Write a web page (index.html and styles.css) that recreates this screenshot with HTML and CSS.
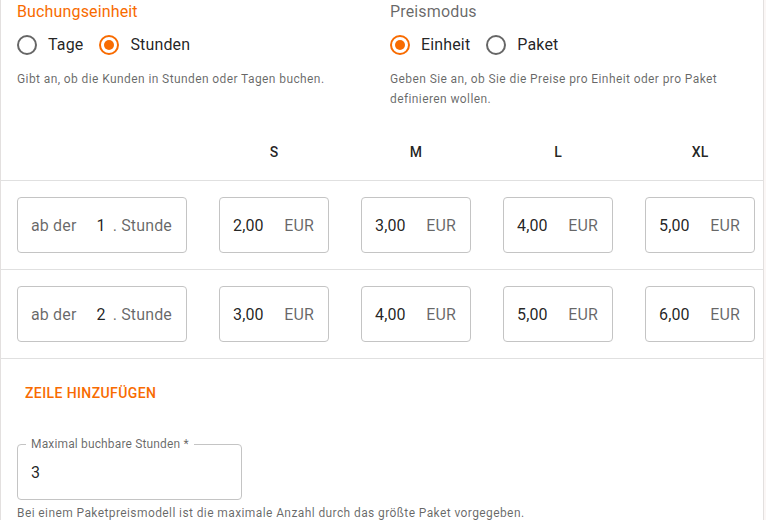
FILE: index.html
```html
<!DOCTYPE html>
<html lang="de">
<head>
<meta charset="utf-8">
<title>Preise</title>
<link rel="stylesheet" href="styles.css">
</head>
<body>
<div class="card">
  <div class="top">
    <div class="group">
      <div class="legend legend-active">Buchungseinheit</div>
      <div class="radios">
        <label class="radio"><span class="icon"><svg width="24" height="24" viewBox="0 0 24 24"><circle cx="12" cy="12" r="9" fill="none" stroke="currentColor" stroke-width="2"/></svg></span><span class="rlabel">Tage</span></label>
        <label class="radio radio-on"><span class="icon"><svg width="24" height="24" viewBox="0 0 24 24"><circle cx="12" cy="12" r="9" fill="none" stroke="currentColor" stroke-width="2"/><circle cx="12" cy="12" r="5" fill="currentColor"/></svg></span><span class="rlabel">Stunden</span></label>
      </div>
      <p class="help">Gibt an, ob die Kunden in Stunden oder Tagen buchen.</p>
    </div>
    <div class="group">
      <div class="legend">Preismodus</div>
      <div class="radios">
        <label class="radio radio-on"><span class="icon"><svg width="24" height="24" viewBox="0 0 24 24"><circle cx="12" cy="12" r="9" fill="none" stroke="currentColor" stroke-width="2"/><circle cx="12" cy="12" r="5" fill="currentColor"/></svg></span><span class="rlabel">Einheit</span></label>
        <label class="radio"><span class="icon"><svg width="24" height="24" viewBox="0 0 24 24"><circle cx="12" cy="12" r="9" fill="none" stroke="currentColor" stroke-width="2"/></svg></span><span class="rlabel">Paket</span></label>
      </div>
      <p class="help help-wide">Geben Sie an, ob Sie die Preise pro Einheit oder pro Paket definieren wollen.</p>
    </div>
  </div>

  <div class="row head">
    <div class="cell-first"></div>
    <div class="cell">S</div>
    <div class="cell">M</div>
    <div class="cell">L</div>
    <div class="cell">XL</div>
  </div>

  <div class="row">
    <div class="box box-first"><span class="adorn">ab der</span><span class="num">1</span><span class="adorn">. Stunde</span></div>
    <div class="box box-price"><span class="val">2,00</span><span class="adorn">EUR</span></div>
    <div class="box box-price"><span class="val">3,00</span><span class="adorn">EUR</span></div>
    <div class="box box-price"><span class="val">4,00</span><span class="adorn">EUR</span></div>
    <div class="box box-price"><span class="val">5,00</span><span class="adorn">EUR</span></div>
  </div>

  <div class="row">
    <div class="box box-first"><span class="adorn">ab der</span><span class="num">2</span><span class="adorn">. Stunde</span></div>
    <div class="box box-price"><span class="val">3,00</span><span class="adorn">EUR</span></div>
    <div class="box box-price"><span class="val">4,00</span><span class="adorn">EUR</span></div>
    <div class="box box-price"><span class="val">5,00</span><span class="adorn">EUR</span></div>
    <div class="box box-price"><span class="val">6,00</span><span class="adorn">EUR</span></div>
  </div>

  <div class="bottom">
    <button class="textbtn" type="button">Zeile hinzufügen</button>
    <div class="field">
      <span class="flabel">Maximal buchbare Stunden *</span>
      <span class="fvalue">3</span>
    </div>
    <p class="help">Bei einem Paketpreismodell ist die maximale Anzahl durch das größte Paket vorgegeben.</p>
  </div>
</div>
</body>
</html>
```

FILE: styles.css
```css
html, body {
  margin: 0;
  padding: 0;
}
body {
  background: #fbf7f6;
  font-family: Roboto, "Liberation Sans", Arial, sans-serif;
  color: rgba(0, 0, 0, 0.87);
  overflow: hidden;
}
.card {
  width: 762px;
  height: 520px;
  background: #ffffff;
  border-left: 1px solid #e3e0df;
  border-right: 1px solid #e3e0df;
}
.top {
  display: grid;
  grid-template-columns: 373px 356px;
  padding: 0 0 15px 16px;
  align-items: start;
}
.legend {
  font-size: 16px;
  line-height: 24px;
  letter-spacing: 0.15px;
  color: rgba(0, 0, 0, 0.6);
}
.legend-active {
  color: #f86b00;
}
.radios {
  display: flex;
  height: 42px;
  align-items: center;
}
.radio {
  display: inline-flex;
  align-items: center;
  margin-left: -11px;
  margin-right: 16px;
  cursor: pointer;
}
.icon {
  display: flex;
  padding: 9px;
  color: rgba(0, 0, 0, 0.6);
}
.radio-on .icon {
  color: #f86b00;
}
.rlabel {
  font-size: 16px;
  line-height: 24px;
  letter-spacing: 0.15px;
}
.help {
  margin: 3px 0 0;
  font-size: 12px;
  line-height: 20px;
  letter-spacing: 0.4px;
  color: rgba(0, 0, 0, 0.6);
}
.row {
  display: flex;
  gap: 32px;
  padding: 16px 0 16px 16px;
  border-bottom: 1px solid #e0e0e0;
}
.head {
  font-size: 14px;
  font-weight: 500;
  line-height: 24px;
  letter-spacing: 0.15px;
}
.cell-first {
  width: 170px;
  flex-shrink: 0;
}
.cell {
  width: 110px;
  flex-shrink: 0;
  text-align: center;
}
.box {
  box-sizing: border-box;
  flex-shrink: 0;
  height: 56px;
  border: 1px solid #c4c4c4;
  border-radius: 4px;
  display: flex;
  align-items: center;
  padding: 0 14px 0 13px;
  font-size: 16px;
  letter-spacing: 0.15px;
  white-space: nowrap;
}
.box-first {
  width: 170px;
}
.box-price {
  width: 110px;
  justify-content: space-between;
}
.adorn {
  color: rgba(0, 0, 0, 0.6);
}
.num {
  margin: 0 7px 0 20px;
}
.bottom {
  padding: 16px 0 0 16px;
}
.textbtn {
  display: block;
  border: 0;
  background: none;
  padding: 6px 8px;
  font-family: inherit;
  font-size: 14px;
  font-weight: 500;
  line-height: 24px;
  letter-spacing: 0.4px;
  text-transform: uppercase;
  color: #f86b00;
  cursor: pointer;
}
.field {
  position: relative;
  box-sizing: border-box;
  width: 225px;
  height: 56px;
  margin-top: 33px;
  border: 1px solid #c4c4c4;
  border-radius: 4px;
  display: flex;
  align-items: center;
  padding: 0 13px;
  font-size: 16px;
}
.flabel {
  position: absolute;
  top: -9px;
  left: 8px;
  padding: 0 5px;
  background: #ffffff;
  font-size: 12px;
  line-height: 16px;
  letter-spacing: 0.15px;
  color: rgba(0, 0, 0, 0.6);
  white-space: nowrap;
}
```
